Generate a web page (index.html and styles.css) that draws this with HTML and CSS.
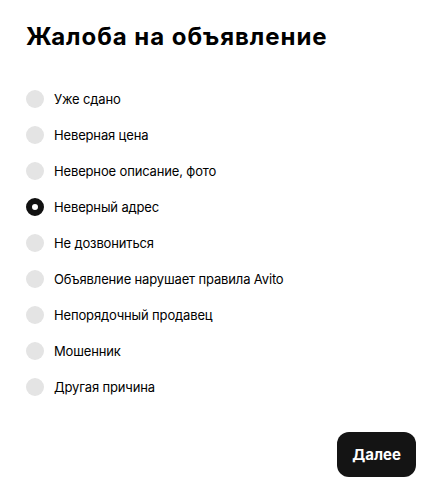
FILE: index.html
```html
<!DOCTYPE html>
<html lang="ru">
<head>
<meta charset="utf-8">
<link rel="stylesheet" href="styles.css">
</head>
<body>
<div class="modal">
  <h1 class="title">Жалоба на объявление</h1>
  <div class="options">
    <label class="option"><span class="radio"></span><span class="label">Уже сдано</span></label>
    <label class="option"><span class="radio"></span><span class="label">Неверная цена</span></label>
    <label class="option"><span class="radio"></span><span class="label">Неверное описание, фото</span></label>
    <label class="option"><span class="radio checked"></span><span class="label">Неверный адрес</span></label>
    <label class="option"><span class="radio"></span><span class="label">Не дозвониться</span></label>
    <label class="option"><span class="radio"></span><span class="label">Объявление нарушает правила Avito</span></label>
    <label class="option"><span class="radio"></span><span class="label">Непорядочный продавец</span></label>
    <label class="option"><span class="radio"></span><span class="label">Мошенник</span></label>
    <label class="option"><span class="radio"></span><span class="label">Другая причина</span></label>
  </div>
  <div class="footer">
    <button class="btn">Далее</button>
  </div>
</div>
</body>
</html>
```
FILE: styles.css
```css
html, body {
  margin: 0;
  padding: 0;
  background: #fff;
}
body {
  font-family: Inter, "Noto Sans", sans-serif;
  color: #000;
}
.modal {
  width: 446px;
  height: 491px;
  box-sizing: border-box;
  padding: 21px 30px 0 26px;
  display: flex;
  flex-direction: column;
}
.title {
  margin: 0;
  font-size: 24px;
  line-height: 32px;
  font-weight: 700;
  letter-spacing: 0.95px;
}
.options {
  margin-top: 28px;
  display: flex;
  flex-direction: column;
}
.option {
  display: flex;
  align-items: center;
  height: 36px;
  gap: 10px;
}
.radio {
  width: 18px;
  height: 18px;
  border-radius: 50%;
  background: #e4e4e4;
  box-sizing: border-box;
  flex: none;
}
.radio.checked {
  background: #fff;
  border: 6px solid #111;
}
.label {
  font-size: 13px;
  line-height: 18px;
  letter-spacing: -0.15px;
}
.footer {
  margin-top: 27px;
  display: flex;
  justify-content: flex-end;
}
.btn {
  width: 79px;
  height: 45px;
  border: none;
  border-radius: 12px;
  background: #141414;
  color: #fff;
  font-family: Inter, "Noto Sans", sans-serif;
  font-weight: 700;
  font-size: 15px;
  padding: 0;
}
```
